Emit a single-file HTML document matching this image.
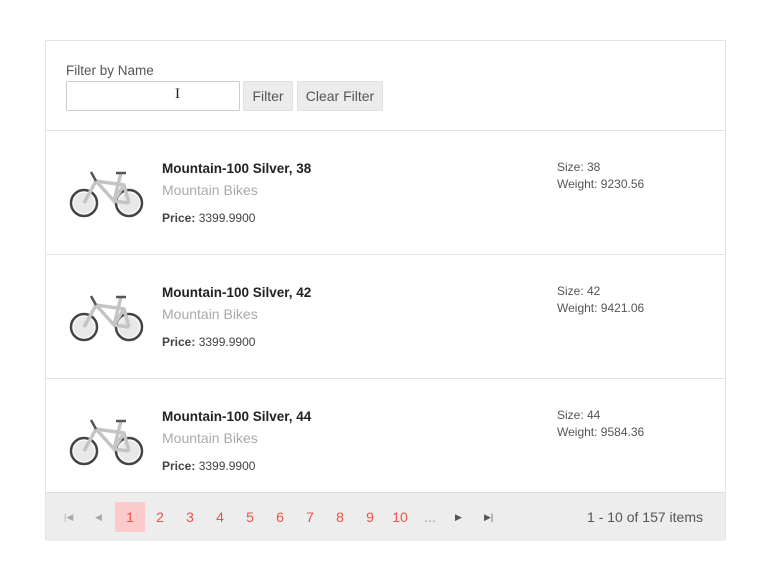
<!DOCTYPE html>
<html><head><meta charset="utf-8"><style>
*{box-sizing:border-box;margin:0;padding:0}
body{width:770px;height:580px;background:#fff;font-family:"Liberation Sans",Roboto,sans-serif;position:relative;overflow:hidden}
.box{position:absolute;left:45px;top:40px;width:681px;height:500px;border:1px solid #e4e4e4;border-bottom:none}
.hdr{position:absolute;left:0;top:0;width:679px;height:90px;border-bottom:1px solid #e4e4e4}
.lbl{position:absolute;left:20px;top:22px;font-size:13.5px;color:#555}
.inp{position:absolute;left:20px;top:40px;width:174px;height:30px;border:1px solid #ccc;border-radius:2px}
.btn{position:absolute;top:40px;height:30px;background:#ececec;border:1px solid #e0e0e0;border-radius:2px;font-size:14px;color:#555;line-height:28px;text-align:center}
.row{position:absolute;left:0;width:679px;border-bottom:1px solid #e4e4e4}
.bike{position:absolute;left:20px;top:28px}
.name{position:absolute;left:116px;font-size:13.5px;font-weight:bold;color:#222}
.cat{position:absolute;left:116px;font-size:14px;color:#aaa}
.price{position:absolute;left:116px;font-size:12px;color:#444}
.sz{position:absolute;left:511px;font-size:12px;color:#555;line-height:17px}
.pager{position:absolute;left:0;top:451px;width:679px;height:49px;background:#ededed;border-top:1px solid #ddd}
.pg{position:absolute;top:9px;width:30px;height:30px;line-height:30px;text-align:center;font-size:14px;color:#e9534a}
.ar{position:absolute;top:9px;height:30px;line-height:30px;font-size:9px;color:#555}
.info{position:absolute;right:22px;top:9px;line-height:30px;font-size:14px;color:#555}
</style></head><body>
<div class="box">
 <div class="hdr">
  <div class="lbl">Filter by Name</div>
  <div class="inp"><span style="position:absolute;left:108px;top:4px;font-size:15px;color:#222;font-family:'Liberation Serif',serif">I</span></div>
  <div class="btn" style="left:197px;width:50px">Filter</div>
  <div class="btn" style="left:251px;width:86px">Clear Filter</div>
 </div>

 <div class="row" style="top:90px;height:124px">
  <svg class="bike" width="80" height="60" viewBox="0 0 80 60"><g fill="none"><circle cx="18" cy="44" r="13" stroke="#444" stroke-width="2.5"/><circle cx="63" cy="44" r="13" stroke="#444" stroke-width="2.5"/><circle cx="18" cy="44" r="10.5" fill="#e8e8e8"/><circle cx="63" cy="44" r="10.5" fill="#e8e8e8"/><path d="M18 44 L30 22 L58 26 L63 44 M30 22 L48 42 L58 26 M48 42 L63 44 M55 14 L48 42" stroke="#c4c4c4" stroke-width="3.5"/><path d="M25 13 L30 22 M50 14 L60 14" stroke="#555" stroke-width="2.5"/></g></svg>
  <div class="name" style="top:30px">Mountain-100 Silver, 38</div>
  <div class="cat" style="top:51px">Mountain Bikes</div>
  <div class="price" style="top:80px"><b>Price:</b> 3399.9900</div>
  <div class="sz" style="top:28px">Size: 38<br>Weight: 9230.56</div>
 </div>

 <div class="row" style="top:214px;height:124px">
  <svg class="bike" width="80" height="60" viewBox="0 0 80 60"><g fill="none"><circle cx="18" cy="44" r="13" stroke="#444" stroke-width="2.5"/><circle cx="63" cy="44" r="13" stroke="#444" stroke-width="2.5"/><circle cx="18" cy="44" r="10.5" fill="#e8e8e8"/><circle cx="63" cy="44" r="10.5" fill="#e8e8e8"/><path d="M18 44 L30 22 L58 26 L63 44 M30 22 L48 42 L58 26 M48 42 L63 44 M55 14 L48 42" stroke="#c4c4c4" stroke-width="3.5"/><path d="M25 13 L30 22 M50 14 L60 14" stroke="#555" stroke-width="2.5"/></g></svg>
  <div class="name" style="top:30px">Mountain-100 Silver, 42</div>
  <div class="cat" style="top:51px">Mountain Bikes</div>
  <div class="price" style="top:80px"><b>Price:</b> 3399.9900</div>
  <div class="sz" style="top:28px">Size: 42<br>Weight: 9421.06</div>
 </div>

 <div class="row" style="top:338px;height:113px;border-bottom:none">
  <svg class="bike" width="80" height="60" viewBox="0 0 80 60"><g fill="none"><circle cx="18" cy="44" r="13" stroke="#444" stroke-width="2.5"/><circle cx="63" cy="44" r="13" stroke="#444" stroke-width="2.5"/><circle cx="18" cy="44" r="10.5" fill="#e8e8e8"/><circle cx="63" cy="44" r="10.5" fill="#e8e8e8"/><path d="M18 44 L30 22 L58 26 L63 44 M30 22 L48 42 L58 26 M48 42 L63 44 M55 14 L48 42" stroke="#c4c4c4" stroke-width="3.5"/><path d="M25 13 L30 22 M50 14 L60 14" stroke="#555" stroke-width="2.5"/></g></svg>
  <div class="name" style="top:30px">Mountain-100 Silver, 44</div>
  <div class="cat" style="top:51px">Mountain Bikes</div>
  <div class="price" style="top:80px"><b>Price:</b> 3399.9900</div>
  <div class="sz" style="top:28px">Size: 44<br>Weight: 9584.36</div>
 </div>

 <div class="pager">
  <div class="ar" style="left:18px;color:#aaa">|◀</div>
  <div class="ar" style="left:49px;color:#aaa">◀</div>
  <div class="pg" style="left:69px;background:#fccaca">1</div>
  <div class="pg" style="left:99px">2</div>
  <div class="pg" style="left:129px">3</div>
  <div class="pg" style="left:159px">4</div>
  <div class="pg" style="left:189px">5</div>
  <div class="pg" style="left:219px">6</div>
  <div class="pg" style="left:249px">7</div>
  <div class="pg" style="left:279px">8</div>
  <div class="pg" style="left:309px">9</div>
  <div class="pg" style="left:339px">10</div>
  <div class="pg" style="left:369px;color:#999">...</div>
  <div class="ar" style="left:409px">▶</div>
  <div class="ar" style="left:438px">▶|</div>
  <div class="info">1 - 10 of 157 items</div>
 </div>
</div>
</body></html>
